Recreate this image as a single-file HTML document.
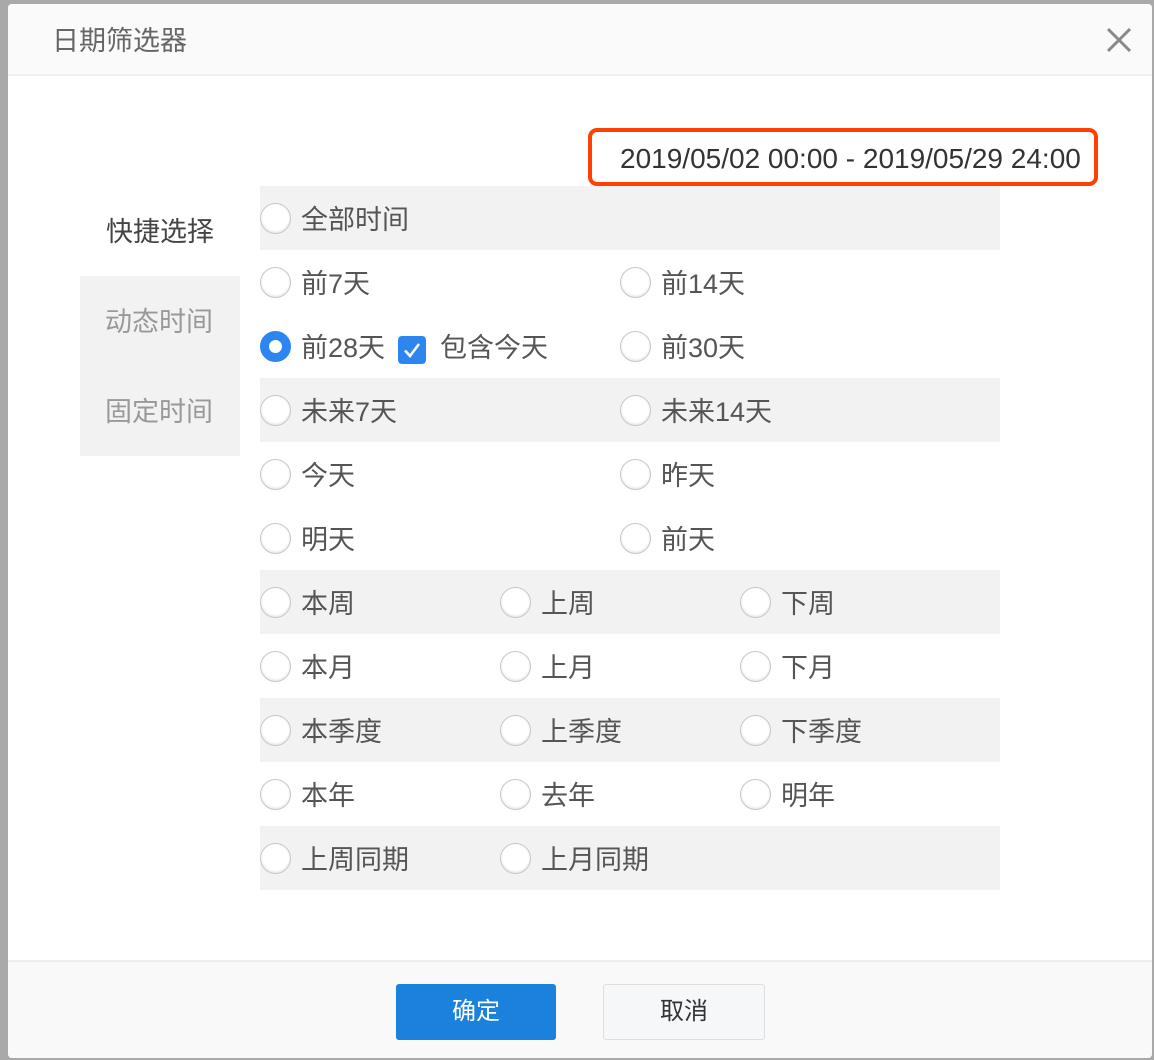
<!DOCTYPE html>
<html><head><meta charset="utf-8"><style>
*,*:before,*:after{margin:0;padding:0;box-sizing:border-box}
body{width:1154px;height:1060px;background:#a9a9a9;position:relative;overflow:hidden;font-family:"Liberation Sans","Noto Sans CJK SC",sans-serif}
.dlg{position:absolute;left:8px;top:4px;width:1144px;height:1054px;background:#fff;border-radius:4px;overflow:hidden}
.hd{position:absolute;left:0;top:0;width:100%;height:72px;background:#fafafa;border-bottom:2px solid #eee}
.title{position:absolute;left:44px;top:21px;font-size:27px;color:#666;line-height:32px}
.x{position:absolute;left:1097px;top:22px}
.date{position:absolute;left:580px;top:124px;width:510px;height:58px;border:4px solid #ff4000;border-radius:9px;font-size:28px;color:#333;line-height:54px;padding-left:28px}
.side1{position:absolute;left:98px;top:210px;font-size:27px;color:#444;line-height:36px}
.sidebox{position:absolute;left:72px;top:272px;width:160px;height:180px;background:#f2f2f2}
.sidebox div{position:absolute;left:25px;font-size:27px;color:#999;line-height:36px}
.row{position:absolute;left:252px;width:740px;height:64px}
.row.s{background:#f2f2f2}
.it{position:absolute;top:2px;height:64px;line-height:64px;font-size:27px;color:#555;padding-left:41px}
.it:before{content:"";position:absolute;left:0;top:15px;width:31px;height:31px;border-radius:50%;border:1px solid #c8c8c8;background:#fff;box-shadow:inset 0 -1px 2px rgba(0,0,0,.12)}
.it.on:before{background:#fff;border:9px solid #2d85f0;box-shadow:none}
.it.nr{padding-left:0}
.it.nr:before{display:none}
.cb{position:absolute;left:138px;top:22px;width:28px;height:28px;background:#2d85f0;border-radius:4px}
.ft{position:absolute;left:0;top:956px;width:100%;height:98px;background:#f9f9f9;border-top:2px solid #eee}
.btn{position:absolute;top:22px;width:160px;height:56px;border-radius:3px;font-size:24px;text-align:center;line-height:56px}
</style></head><body>
<div class="dlg">
<div class="hd"><div class="title">日期筛选器</div>
<svg class="x" width="28" height="28" viewBox="0 0 28 28"><path d="M3 3L25 25M25 3L3 25" stroke="#888" stroke-width="3"/></svg></div>
<div class="date">2019/05/02 00:00 - 2019/05/29 24:00</div>
<div class="side1">快捷选择</div>
<div class="sidebox"><div style="top:28px">动态时间</div><div style="top:118px">固定时间</div></div>

<div class="row s" style="top:182px"><div class="it" style="left:0">全部时间</div></div>
<div class="row" style="top:246px"><div class="it" style="left:0">前7天</div><div class="it" style="left:360px">前14天</div></div>
<div class="row" style="top:310px"><div class="it on" style="left:0">前28天</div>
<div class="cb"><svg width="28" height="28" viewBox="0 0 28 28"><path d="M7 14.5L12 20L21 8" stroke="#fff" stroke-width="2.6" fill="none"/></svg></div>
<div class="it nr" style="left:180px">包含今天</div><div class="it" style="left:360px">前30天</div></div>
<div class="row s" style="top:374px"><div class="it" style="left:0">未来7天</div><div class="it" style="left:360px">未来14天</div></div>
<div class="row" style="top:438px"><div class="it" style="left:0">今天</div><div class="it" style="left:360px">昨天</div></div>
<div class="row" style="top:502px"><div class="it" style="left:0">明天</div><div class="it" style="left:360px">前天</div></div>
<div class="row s" style="top:566px"><div class="it" style="left:0">本周</div><div class="it" style="left:240px">上周</div><div class="it" style="left:480px">下周</div></div>
<div class="row" style="top:630px"><div class="it" style="left:0">本月</div><div class="it" style="left:240px">上月</div><div class="it" style="left:480px">下月</div></div>
<div class="row s" style="top:694px"><div class="it" style="left:0">本季度</div><div class="it" style="left:240px">上季度</div><div class="it" style="left:480px">下季度</div></div>
<div class="row" style="top:758px"><div class="it" style="left:0">本年</div><div class="it" style="left:240px">去年</div><div class="it" style="left:480px">明年</div></div>
<div class="row s" style="top:822px"><div class="it" style="left:0">上周同期</div><div class="it" style="left:240px">上月同期</div></div>

<div class="ft">
<div class="btn" style="left:388px;background:#1a82dc;color:#fff">确定</div>
<div class="btn" style="left:595px;width:162px;background:#f6f7f9;border:1px solid #ddd;color:#333;line-height:54px">取消</div>
</div>
</div>
</body></html>
